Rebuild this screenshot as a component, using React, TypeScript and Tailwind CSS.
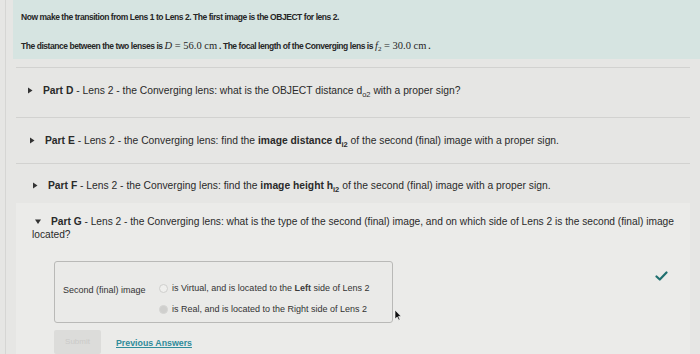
import React from "react";

const Arrow: React.FC<{ down?: boolean }> = ({ down }) => (
  <svg className={down ? "inline-block ml-[3px] mr-[10px] align-[0px]" : "inline-block mr-[10px] align-[0px]"} width="6" height="7" viewBox="0 0 6 7">
    {down ? <path d="M0 1.5 L6 1.5 L3 6 Z" fill="#333" /> : <path d="M1 0.5 L5.5 3.5 L1 6.5 Z" fill="#333" />}
  </svg>
);

const Sub: React.FC<{ children: React.ReactNode }> = ({ children }) => (
  <span className="relative top-[3px] text-[7.5px] leading-none">{children}</span>
);

const parts = [
  {
    key: "D",
    pt: "pt-[17px]",
    h: "h-[52px]",
    indent: "pl-[11px]",
    body: (
      <>
        <b>Part D</b> - Lens 2 - the Converging lens: what is the OBJECT distance d<Sub>o2</Sub> with a proper sign?
      </>
    ),
  },
  {
    key: "E",
    pt: "pt-[17px]",
    h: "h-[47px]",
    indent: "pl-[13px]",
    body: (
      <>
        <b>Part E</b> - Lens 2 - the Converging lens: find the <b>image distance d<Sub>i2</Sub></b> of the second (final) image with a proper sign.
      </>
    ),
  },
  {
    key: "F",
    pt: "pt-[16px]",
    h: "h-[41px]",
    indent: "pl-[16px]",
    body: (
      <>
        <b>Part F</b> - Lens 2 - the Converging lens: find the <b>image height h<Sub>i2</Sub></b> of the second (final) image with a proper sign.
      </>
    ),
  },
];

export default function App() {
  return (
    <div className="relative w-[700px] h-[354px] overflow-hidden bg-[#e6e6e4] font-['Liberation_Sans',Arial,sans-serif] text-[#2a2a2a]">
      <div className="ml-[5px] h-full border-l border-[#d6d6d4] flex flex-col">
        {/* intro banner */}
        <div className="ml-[7px] h-[61px] bg-[#d6e4e1] pl-[8px] pt-[11px] font-bold text-[8.5px] tracking-[-0.45px] leading-[12px] text-[#262626]">
          <p>Now make the transition from Lens 1 to Lens 2. The first image is the OBJECT for lens 2.</p>
          <p className="mt-[17px]">
            The distance between the two lenses is{" "}
            <span className="font-['Liberation_Serif',serif] font-normal text-[10.5px] tracking-normal">
              <i>D</i> = 56.0 cm
            </span>{" "}
            . The focal length of the Converging lens is{" "}
            <span className="font-['Liberation_Serif',serif] font-normal text-[10.5px] tracking-normal">
              <i>f</i>
              <span className="relative top-[2px] text-[7px]">2</span> = 30.0 cm
            </span>{" "}
            .
          </p>
        </div>

        <div className="h-[8px]" />

        {/* collapsed parts */}
        {parts.map((p) => (
          <div key={p.key} className={`${p.h} ${p.pt} ${p.indent} text-[10.3px] border-t border-[#d2d2d0] mx-[10px] leading-[12px]`}>
            <Arrow />
            {p.body}
          </div>
        ))}

        {/* open part G */}
        <div className="flex-1 ml-[10px] mr-[10px] bg-[#ebebe9] pt-[12px] pl-[16px] pr-[10px]">
          <p className="text-[10.2px] leading-[13px]">
            <Arrow down />
            <b>Part G</b> - Lens 2 - the Converging lens: what is the type of the second (final) image, and on which side of Lens 2 is the second (final) image located?
          </p>

          <div className="flex items-start mt-[20px]">
            <div className="ml-[22px] w-[339px]">
              <div className="h-[62px] rounded-[3px] border border-[#b9b9b7] bg-[#eaeae8] flex items-start pt-[20px] pl-[8px] text-[9px] leading-[12px] text-[#333]">
                <span className="w-[96px] mt-[2px]">Second (final) image</span>
                <div className="flex flex-col gap-[9px]">
                  <label className="flex items-center gap-[4px]">
                    <span className="w-[9px] h-[9px] rounded-full border border-[#cfcfcd] bg-[#efefed]" />
                    <span>
                      is Virtual, and is located to the <span className="font-bold text-[#3a3a3a]">Left</span> side of Lens 2
                    </span>
                  </label>
                  <label className="flex items-center gap-[4px]">
                    <span className="w-[9px] h-[9px] rounded-full border border-[#d5d5d3] bg-[#cfcfcd]" />
                    <span>is Real, and is located to the Right side of Lens 2</span>
                  </label>
                </div>
              </div>
              <div className="flex items-center mt-[7px] gap-[15px]">
                <button className="w-[47px] h-[24px] bg-[#dcdcda] rounded-[2px] text-[8px] text-[#cacac8]">Submit</button>
                <a className="text-[8.8px] font-bold text-[#2f8c9a] underline mt-[3px]">Previous Answers</a>
              </div>
            </div>
            <div className="flex-1 flex justify-end pr-[12px] pt-[10px]">
              <svg width="13" height="10" viewBox="0 0 13 10">
                <path d="M1.5 5.5 L4.8 8.5 L11.5 1.5" fill="none" stroke="#1f6f6f" strokeWidth="2.2" strokeLinecap="round" strokeLinejoin="round" />
              </svg>
            </div>
          </div>
        </div>
      </div>

      {/* mouse cursor */}
      <svg className="absolute left-[394px] top-[309px]" width="8" height="12" viewBox="0 0 8 12">
        <path d="M1 1 L1 10 L3.2 8 L4.8 11.2 L6 10.6 L4.5 7.5 L7.2 7.5 Z" fill="#111" stroke="#fff" strokeWidth="0.6" />
      </svg>
    </div>
  );
}
